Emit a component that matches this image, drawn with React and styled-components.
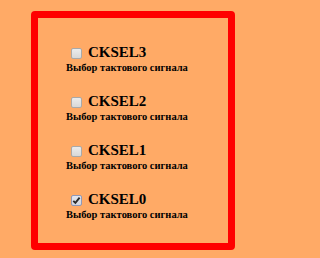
import React from 'react';
import styled, { createGlobalStyle } from 'styled-components';

const GlobalStyle = createGlobalStyle`
  html, body {
    margin: 0;
    padding: 0;
    background: #ffaa66;
  }
  body {
    font-family: "Liberation Serif", "Times New Roman", serif;
    color: #000;
  }
`;

const Frame = styled.div`
  box-sizing: border-box;
  margin: 11px 0 0 31px;
  width: 204px;
  height: 239px;
  border: 7px solid #ff0000;
  border-radius: 4px;
  padding: 27px 0 0 28px;
  display: flex;
  flex-direction: column;
  gap: 21px;
`;

const Option = styled.div`
  display: flex;
  flex-direction: column;
`;

const Head = styled.label`
  display: flex;
  align-items: flex-start;
  gap: 6px;
  padding-left: 5px;
  font-size: 15px;
  font-weight: bold;
  line-height: 15px;
  cursor: pointer;
`;

const Box = styled.span`
  box-sizing: border-box;
  flex: none;
  width: 11px;
  height: 11px;
  margin-top: 3px;
  border-radius: 2px;
  border: 1px solid ${(p) => (p.$on ? '#8f98b8' : '#a9a9a9')};
  background: ${(p) =>
    p.$on
      ? 'linear-gradient(#e4e6ee, #d3d6e0)'
      : 'linear-gradient(#ececec, #d8d8d8)'};
  display: flex;
  align-items: center;
  justify-content: center;
`;

const Caption = styled.div`
  font-size: 10.5px;
  font-weight: bold;
  line-height: 11px;
  margin-top: 2px;
`;

const options = [
  { name: 'CKSEL3', checked: false },
  { name: 'CKSEL2', checked: false },
  { name: 'CKSEL1', checked: false },
  { name: 'CKSEL0', checked: true },
];

function Check({ on }) {
  return (
    <Box $on={on} role="checkbox" aria-checked={on}>
      {on && (
        <svg width="9" height="9" viewBox="0 0 9 9">
          <path d="M1.3 4.8 L3.4 6.9 L7.6 1.6" fill="none" stroke="#2b2b2b" strokeWidth="1.9" />
        </svg>
      )}
    </Box>
  );
}

export default function App() {
  return (
    <>
      <GlobalStyle />
      <Frame>
        {options.map((o) => (
          <Option key={o.name}>
            <Head>
              <Check on={o.checked} />
              {o.name}
            </Head>
            <Caption>Выбор тактового сигнала</Caption>
          </Option>
        ))}
      </Frame>
    </>
  );
}
